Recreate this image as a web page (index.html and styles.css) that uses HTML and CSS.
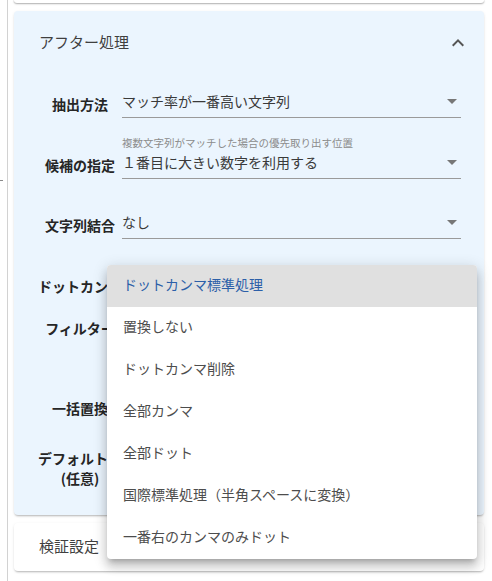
FILE: index.html
```html
<!DOCTYPE html>
<html lang="ja">
<head>
<meta charset="utf-8">
<title>アフター処理</title>
<link rel="stylesheet" href="styles.css">
</head>
<body>
<div class="page">
  <div class="rail"><span class="tick"></span></div>
  <div class="main">
    <div class="prev-card"></div>

    <section class="panel panel-open">
      <header class="panel-head">
        <span class="panel-title">アフター処理</span>
        <svg class="chev" viewBox="0 0 24 24" width="24" height="24"><path d="M7.41,15.41L12,10.83L16.59,15.41L18,14L12,8L6,14L7.41,15.41Z"/></svg>
      </header>
      <div class="panel-body">
        <div class="row row-1">
          <div class="label">抽出方法</div>
          <div class="field">
            <div class="select"><span class="value">マッチ率が一番高い文字列</span><svg class="caret" viewBox="0 0 24 24" width="24" height="24"><path d="M7,10L12,15L17,10H7Z"/></svg></div>
          </div>
        </div>
        <div class="row row-2">
          <div class="label">候補の指定</div>
          <div class="field">
            <div class="hint">複数文字列がマッチした場合の優先取り出す位置</div>
            <div class="select"><span class="value">１番目に大きい数字を利用する</span><svg class="caret" viewBox="0 0 24 24" width="24" height="24"><path d="M7,10L12,15L17,10H7Z"/></svg></div>
          </div>
        </div>
        <div class="row row-3">
          <div class="label">文字列結合</div>
          <div class="field">
            <div class="select"><span class="value">なし</span><svg class="caret" viewBox="0 0 24 24" width="24" height="24"><path d="M7,10L12,15L17,10H7Z"/></svg></div>
          </div>
        </div>
        <div class="row row-4">
          <div class="label">ドットカンマ</div>
          <div class="field">
            <div class="select"><span class="value"></span><svg class="caret" viewBox="0 0 24 24" width="24" height="24"><path d="M7,10L12,15L17,10H7Z"/></svg></div>
          </div>
        </div>
        <div class="row row-5">
          <div class="label">フィルター</div>
          <div class="field">
            <div class="select"><span class="value"></span></div>
          </div>
        </div>
        <div class="row row-6">
          <div class="label">一括置換</div>
          <div class="field">
            <div class="select"><span class="value"></span></div>
          </div>
        </div>
        <div class="row row-7">
          <div class="label label-2l">デフォルト値<br>(任意)</div>
          <div class="field">
            <div class="select"><span class="value"></span></div>
          </div>
        </div>
      </div>
    </section>

    <section class="panel panel-closed">
      <header class="panel-head closed-head">
        <span class="panel-title">検証設定</span>
      </header>
    </section>
  </div>

  <ul class="menu">
    <li class="item active">ドットカンマ標準処理</li>
    <li class="item">置換しない</li>
    <li class="item">ドットカンマ削除</li>
    <li class="item">全部カンマ</li>
    <li class="item">全部ドット</li>
    <li class="item">国際標準処理（半角スペースに変換）</li>
    <li class="item">一番右のカンマのみドット</li>
  </ul>
</div>
</body>
</html>
```

FILE: styles.css
```css
* { box-sizing: border-box; }

html, body {
  margin: 0;
  padding: 0;
  background: #ffffff;
}

body {
  font-family: "Noto Sans CJK JP", "Noto Sans", "Liberation Sans", sans-serif;
  color: #333333;
}

.page {
  position: relative;
  display: flex;
  width: 492px;
  height: 581px;
  overflow: hidden;
}

.rail {
  flex: none;
  width: 8px;
  border-right: 1px solid #d2d2d2;
}

.tick {
  display: block;
  margin-top: 180px;
  width: 3px;
  height: 1px;
  background: #8a8a8a;
}

.main {
  flex: none;
  width: 470px;
  margin-left: 6px;
}

.prev-card {
  height: 3px;
  background: #ffffff;
  border-radius: 0 0 4px 4px;
  box-shadow: 0 1px 2px rgba(0, 0, 0, 0.28), 0 0 0 1px rgba(0, 0, 0, 0.05);
}

.panel {
  border-radius: 4px;
  box-shadow: 0 2px 2px -1px rgba(0, 0, 0, 0.22), 0 1px 3px 0 rgba(0, 0, 0, 0.10);
}

.panel-open {
  margin-top: 8px;
  height: 504px;
  background: #ebf5fe;
}

.panel-closed {
  margin-top: 8px;
  background: #ffffff;
}

.panel-head {
  display: flex;
  align-items: center;
  justify-content: space-between;
  height: 64px;
  padding: 0 14px 3px 25px;
}

.closed-head {
  height: 48px;
  padding-bottom: 4px;
}

.panel-title {
  font-size: 15px;
  color: #3f3f3f;
}

.chev {
  display: block;
  margin-top: 2px;
  fill: #555555;
}

.panel-body {
  padding: 0 23px 0 24px;
}

.row {
  display: grid;
  grid-template-columns: 84px 1fr;
  align-items: end;
}

.row-1 { height: 43px; }
.row-2 { height: 61px; }
.row-3 { height: 60px; }
.row-4 { height: 61px; }
.row-5 { height: 42px; }
.row-6 { height: 80px; }
.row-7 { height: 66px; }

.label {
  font-size: 14px;
  font-weight: 700;
  line-height: 27px;
  text-align: center;
  white-space: nowrap;
  color: #262626;
}

.label-2l {
  line-height: 20px;
}

.field {
  min-width: 0;
}

.hint {
  font-size: 10.5px;
  line-height: 14px;
  margin-bottom: -4px;
  color: #8c8c8c;
  white-space: nowrap;
}

.select {
  display: flex;
  align-items: center;
  justify-content: space-between;
  height: 33px;
  border-bottom: 1px solid #9a9a9a;
}

.value {
  font-size: 14px;
  line-height: 32px;
  color: #3a3a3a;
  white-space: nowrap;
}

.caret {
  display: block;
  margin-left: auto;
  margin-right: -3px;
  fill: #777777;
}

.menu {
  position: absolute;
  left: 107px;
  top: 265px;
  width: 370px;
  margin: 0;
  padding: 0;
  list-style: none;
  background: #ffffff;
  border-radius: 4px;
  overflow: hidden;
  box-shadow: 0 5px 5px -3px rgba(0, 0, 0, 0.2), 0 8px 10px 1px rgba(0, 0, 0, 0.14), 0 3px 14px 2px rgba(0, 0, 0, 0.12);
}

.item {
  height: 42px;
  line-height: 38px;
  padding: 0 16px 4px;
  font-size: 14px;
  color: #4d4d4d;
  white-space: nowrap;
}

.item.active {
  background: #e0e0e0;
  color: #2c5fa8;
}
```
